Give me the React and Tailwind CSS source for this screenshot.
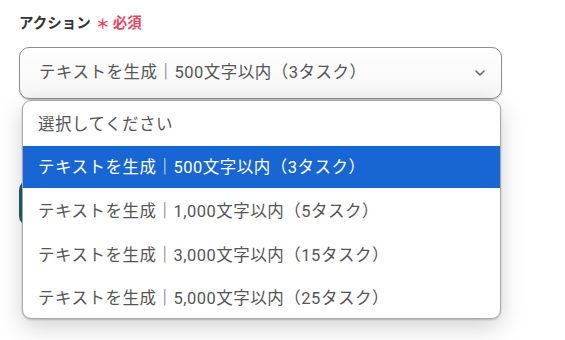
import { ChevronDown } from "lucide-react";

const options = [
  { label: "選択してください", h: "h-[45px] pt-[4px]" },
  { label: "テキストを生成｜500文字以内（3タスク）", h: "h-[42px] pt-[2px]" },
  { label: "テキストを生成｜1,000文字以内（5タスク）", h: "h-[44px] pt-[4px]" },
  { label: "テキストを生成｜3,000文字以内（15タスク）", h: "h-[43px] pt-[5px]" },
  { label: "テキストを生成｜5,000文字以内（25タスク）", h: "h-[43px] pt-[5px]" },
];

export default function App() {
  const font = { fontFamily: 'Roboto, "Noto Sans CJK JP", sans-serif' };
  return (
    <div
      className="w-[565px] h-[340px] bg-white overflow-hidden relative"
      style={font}
    >
      <div className="px-[19px] pt-[13px] w-[521px]">
        <div className="flex items-center h-[22px]">
          <span className="text-[14.5px] font-bold text-[#333]">アクション</span>
          <span className="ml-[5px] text-[14px] font-bold text-[#ec4561]">＊</span>
          <span className="ml-[3px] text-[14.5px] font-bold text-[#ec4561]">必須</span>
        </div>

        <div className="relative mt-[12px]">
          <div className="h-[52px] rounded-[10px] border border-[#8c8c8c] bg-gradient-to-b from-white to-[#f6f6f6] shadow-[0_1px_1px_rgba(0,0,0,0.25)] flex items-center justify-between pl-[19px] pr-[13px]">
            <span className="text-[16.5px] tracking-[0.5px] text-[#555]">{options[1].label}</span>
            <ChevronDown size={16} strokeWidth={2.4} className="text-[#666]" />
          </div>

          <div className="mt-[81px] w-[40px] h-[46px] rounded-l-[10px] bg-[#1d5f68]" />

          <div className="absolute left-[3px] top-[53px] w-[479px] rounded-[9px] border border-[#a9a9a9] bg-white shadow-[0_8px_24px_rgba(0,0,0,0.18),0_1px_2px_rgba(0,0,0,0.2)] overflow-hidden">
            {options.map((o, i) => (
              <div
                key={i}
                className={
                  o.h +
                  (i === 1
                    ? " flex items-center pl-[15px] text-[16.5px] tracking-[0.5px] bg-[#1866d3] text-white"
                    : " flex items-center pl-[15px] text-[16.5px] tracking-[0.5px] text-[#555]")
                }
              >
                {o.label}
              </div>
            ))}
          </div>
        </div>
      </div>
    </div>
  );
}
